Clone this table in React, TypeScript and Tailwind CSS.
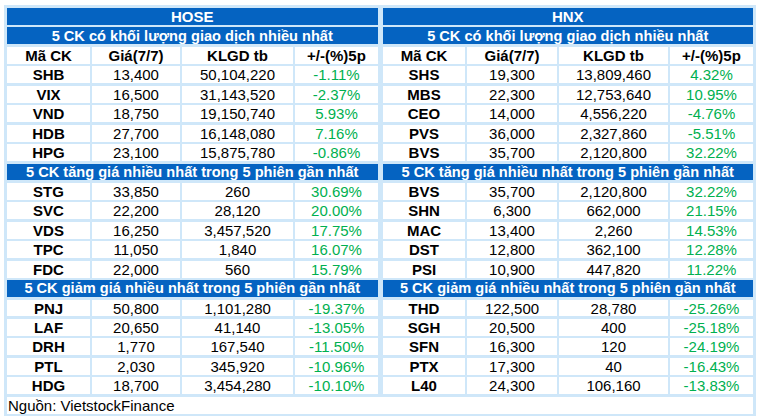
type Row = [string, string, string, string]

const hose: Row[][] = [
  [
    ['SHB', '13,400', '50,104,220', '-1.11%'],
    ['VIX', '16,500', '31,143,520', '-2.37%'],
    ['VND', '18,750', '19,150,740', '5.93%'],
    ['HDB', '27,700', '16,148,080', '7.16%'],
    ['HPG', '23,100', '15,875,780', '-0.86%'],
  ],
  [
    ['STG', '33,850', '260', '30.69%'],
    ['SVC', '22,200', '28,120', '20.00%'],
    ['VDS', '16,250', '3,457,520', '17.75%'],
    ['TPC', '11,050', '1,840', '16.07%'],
    ['FDC', '22,000', '560', '15.79%'],
  ],
  [
    ['PNJ', '50,800', '1,101,280', '-19.37%'],
    ['LAF', '20,650', '41,140', '-13.05%'],
    ['DRH', '1,770', '167,540', '-11.50%'],
    ['PTL', '2,030', '345,920', '-10.96%'],
    ['HDG', '18,700', '3,454,280', '-10.10%'],
  ],
]

const hnx: Row[][] = [
  [
    ['SHS', '19,300', '13,809,460', '4.32%'],
    ['MBS', '22,300', '12,753,640', '10.95%'],
    ['CEO', '14,000', '4,556,220', '-4.76%'],
    ['PVS', '36,000', '2,327,860', '-5.51%'],
    ['BVS', '35,700', '2,120,800', '32.22%'],
  ],
  [
    ['BVS', '35,700', '2,120,800', '32.22%'],
    ['SHN', '6,300', '662,000', '21.15%'],
    ['MAC', '13,400', '2,260', '14.53%'],
    ['DST', '12,800', '362,100', '12.28%'],
    ['PSI', '10,900', '447,820', '11.22%'],
  ],
  [
    ['THD', '122,500', '28,780', '-25.26%'],
    ['SGH', '20,500', '400', '-25.18%'],
    ['SFN', '16,300', '120', '-24.19%'],
    ['PTX', '17,300', '40', '-16.43%'],
    ['L40', '24,300', '106,160', '-13.83%'],
  ],
]

const sections = [
  '5 CK có khối lượng giao dịch nhiều nhất',
  '5 CK tăng giá nhiều nhất trong 5 phiên gần nhất',
  '5 CK giảm giá nhiều nhất trong 5 phiên gần nhất',
]

const leftCols = 'grid-cols-[83px_88px_111px_83px]'
const rightCols = 'grid-cols-[82px_90px_109px_83px]'

function Blue({ text, title }: { text: string; title?: boolean }) {
  return (
    <div
      className={`flex-1 h-[16.9px] bg-[#0563c1] text-white font-bold flex items-center justify-center leading-none whitespace-nowrap ${
        title ? 'text-[15px]' : 'text-[14.6px]'
      }`}
    >
      {text}
    </div>
  )
}

function Cells({ row, cols, header }: { row: Row; cols: string; header?: boolean }) {
  return (
    <div className={`flex-1 grid ${cols} gap-x-[2px]`}>
      {row.map((c, i) => (
        <div
          key={i}
          className={`h-[16.9px] bg-white flex items-center justify-center leading-none text-[15px] ${
            header || i === 0 ? 'font-bold text-black' : i === 3 ? 'text-[#00b050]' : 'text-black'
          }`}
        >
          {c}
        </div>
      ))}
    </div>
  )
}

export default function App() {
  const head: Row = ['Mã CK', 'Giá(7/7)', 'KLGD tb', '+/-(%)5p']
  return (
    <div className="bg-white w-[759px] h-[418px] pt-[5px] pl-[4px]" style={{ fontFamily: '"Liberation Sans", Arial, sans-serif' }}>
      <div className="w-[752px] bg-[#cfe7f9] p-[3px] pb-[2px] flex flex-col gap-y-[2.55px]">
        <div className="flex gap-x-[5px]">
          <Blue text="HOSE" title />
          <Blue text="HNX" title />
        </div>
        {sections.map((s, si) => (
          <div key={si} className="flex flex-col gap-y-[2.55px]">
            <div className="flex gap-x-[5px]">
              <Blue text={s} />
              <Blue text={s} />
            </div>
            {si === 0 && (
              <div className="flex gap-x-[5px]">
                <Cells row={head} cols={leftCols} header />
                <Cells row={head} cols={rightCols} header />
              </div>
            )}
            {hose[si].map((r, ri) => (
              <div key={ri} className="flex gap-x-[5px]">
                <Cells row={r} cols={leftCols} />
                <Cells row={hnx[si][ri]} cols={rightCols} />
              </div>
            ))}
          </div>
        ))}
        <div className="h-[16.9px] bg-white flex items-center text-[15px] text-black leading-none pl-[1px]">
          Nguồn: VietstockFinance
        </div>
      </div>
    </div>
  )
}
